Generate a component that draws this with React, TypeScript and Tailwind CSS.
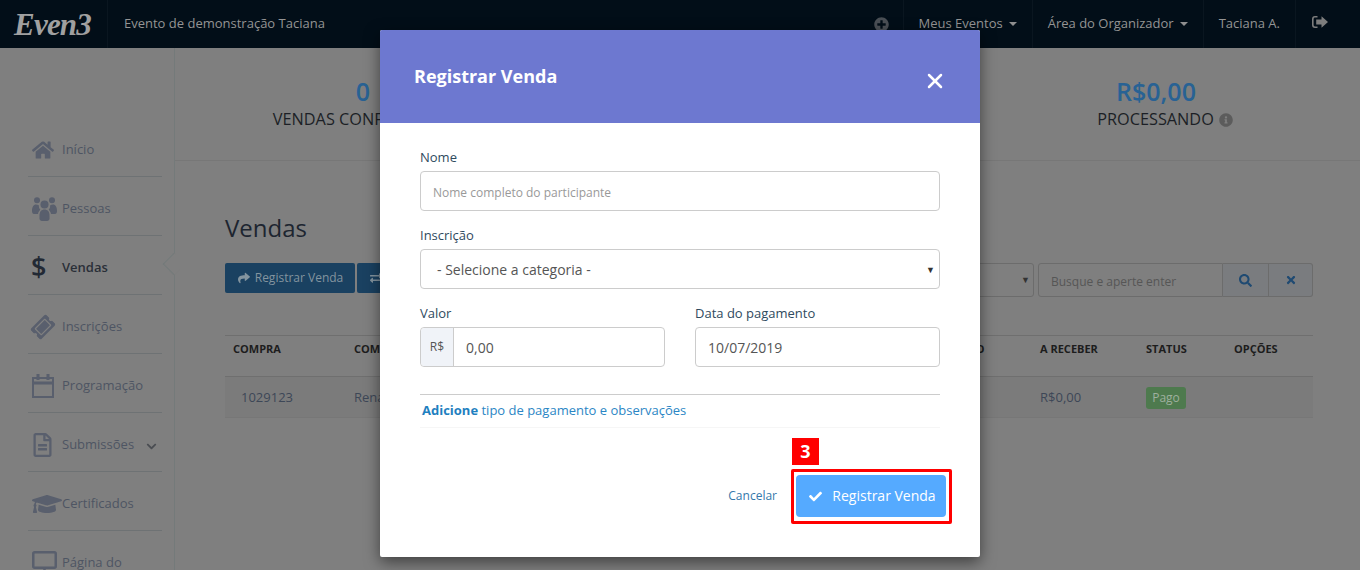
import {
  FaHome,
  FaTicketAlt,
  FaRegFileAlt,
  FaGraduationCap,
  FaShare,
  FaExchangeAlt,
  FaSearch,
  FaTimes,
  FaCheck,
  FaInfoCircle,
  FaPlusCircle,
  FaChevronDown,
} from "react-icons/fa";
import { FiX } from "react-icons/fi";

const UsersIcon = () => (
  <svg viewBox="0 0 25 24" className="h-[24px] w-[25px]" fill="currentColor">
    <circle cx="5" cy="3.2" r="3" />
    <circle cx="20" cy="3.2" r="3" />
    <circle cx="12.5" cy="7.5" r="4" />
    <path d="M0 14c0-4 1.500-6.500 4-6.500 1 0 2 .4 3 1-.4 1.500.2 3.200 1.300 4.300C7 14 6.200 15.500 6 17H2c-1.200 0-2-1-2-3z" />
    <path d="M25 14c0-4-1.500-6.500-4-6.500-1 0-2 .4-3 1 .4 1.500-.2 3.200-1.300 4.300 1.300 1.200 2.100 2.700 2.300 4.200h4c1.200 0 2-1 2-3z" />
    <path d="M12.500 12.500c-3 0-5 2-5 6v3c0 1.500 1 2.500 2.500 2.500h5c1.500 0 2.500-1 2.500-2.500v-3c0-4-2-6-5-6z" />
  </svg>
);

const CalendarIcon = () => (
  <svg viewBox="0 0 22 24" className="h-[24px] w-[22px]" fill="none" stroke="currentColor" strokeWidth="2">
    <rect x="1" y="4" width="20" height="19" />
    <path d="M1 9h20" strokeWidth="3" />
    <path d="M6 0v6M16 0v6" strokeWidth="3" />
  </svg>
);

const DesktopIcon = () => (
  <svg viewBox="0 0 25 24" className="h-[24px] w-[25px]" fill="none" stroke="currentColor" strokeWidth="2.500">
    <rect x="1.250" y="1.250" width="22.500" height="15.500" rx="1.500" />
    <path d="M12.500 17v4M7 22h11" />
  </svg>
);

const menu = [
  { label: "Início", icon: <FaHome className="h-[22px] w-[22px]" /> },
  { label: "Pessoas", icon: <UsersIcon /> },
  { label: "Vendas", icon: <span className="-ml-[1px] -mt-[3px] text-[27px] font-semibold leading-none">$</span>, active: true },
  { label: "Inscrições", icon: <FaTicketAlt className="h-[22px] w-[22px] -rotate-45" /> },
  { label: "Programação", icon: <CalendarIcon /> },
  { label: "Submissões", icon: <FaRegFileAlt className="h-[24px] w-[21px]" />, chevron: true },
  { label: "Certificados", icon: <FaGraduationCap className="h-[26px] w-[30px] shrink-0" /> },
  { label: "Página do", icon: <DesktopIcon /> },
];

const SignOut = () => (
  <svg viewBox="0 0 16 14" className="h-[14px] w-[16px]" fill="currentColor">
    <path d="M5.500 1H3a3 3 0 0 0-3 3v6a3 3 0 0 0 3 3h2.500v-1.600H3A1.400 1.400 0 0 1 1.600 10V4A1.400 1.400 0 0 1 3 2.600h2.500z" />
    <path d="M9.500 1.200 16 7l-6.500 5.800V9.600H4.200V4.400h5.300z" />
  </svg>
);

const Caret = () => (
  <span className="ml-[6px] inline-block h-0 w-0 border-x-[4px] border-t-[4px] border-x-transparent border-t-[#8f8f8f] align-middle" />
);

const Sidebar = () => (
  <aside className="w-[175px] shrink-0 border-r border-[#747a7a] pl-7 pr-3 pt-[70px]">
    {menu.map((item) => (
      <div
        key={item.label}
        className={`relative flex h-[59px] items-center border-b border-[#6e7274] pl-1 pt-[6px] text-[13px] ${
          item.active ? "font-semibold text-[#2a2f38]" : "text-[#4e5563]"
        }`}
      >
        <span className={`flex w-[30px] shrink-0 ${item.active ? "text-[#222934]" : "text-[#595f6d]"}`}>
          {item.icon}
        </span>
        <span>{item.label}</span>
        {item.chevron && <FaChevronDown className="ml-[12px] mt-[2px] h-[11px] w-[11px] text-[#4a4d52]" />}
        {item.active && (
          <span className="absolute right-[-20px] top-[20px] z-10 h-4 w-4 rotate-45 border-b border-l border-[#747a7a] bg-[#7f7f7f]" />
        )}
      </div>
    ))}
  </aside>
);

const Page = () => (
  <div className="flex h-[522px]">
    <Sidebar />
    <main className="min-w-0 flex-1">
      <div className="flex h-[113px] justify-between border-b border-[#777] pl-[56px] pr-[72px] pt-[26px]">
        <div className="w-[264px] text-center">
          <div className="text-[25px] font-semibold leading-[34px] text-[#286294]">0</div>
          <div className="text-[16.3px] font-medium leading-[23px] text-[#1c1f26]">VENDAS CONFIRMADAS</div>
        </div>
        <div className="w-[264px] text-center">
          <div className="text-[25px] font-semibold leading-[34px] text-[#286294]">R$0,00</div>
          <div className="flex items-center justify-center gap-[5px] pl-[18px] text-[16.3px] font-medium leading-[23px] text-[#1c1f26]">
            PROCESSANDO
            <FaInfoCircle className="h-[14px] w-[14px] text-[#5c5c5c]" />
          </div>
        </div>
      </div>
      <div className="pl-[50px] pr-[47px] pt-[50px]">
        <h1 className="text-[24px] leading-[34px] text-[#1d2530]">Vendas</h1>
        <div className="mt-[18px] flex items-start justify-between">
          <div className="flex gap-[2px]">
            <button className="flex h-[30px] w-[130px] items-center justify-center gap-[5px] rounded-[2px] bg-[#1a4161] pl-[1px] text-[12px] text-[#83949f]">
              <FaShare className="h-[12px] w-[12px]" />
              Registrar Venda
            </button>
            <button className="flex h-[30px] w-[130px] items-center gap-[5px] rounded-[2px] bg-[#1a4161] pl-[13px] text-[12px] text-[#83949f]">
              <FaExchangeAlt className="h-[12px] w-[12px]" />
              Transferir
            </button>
          </div>
          <div className="flex h-[34px] items-stretch">
            <div className="mr-1 flex w-[100px] items-center justify-end rounded-[3px] border border-[#6c6c6c] pr-[3px] text-[9px] text-[#333]">
              ▼
            </div>
            <div className="flex w-[185px] items-center rounded-l-[3px] border border-[#6c6c6c] pl-3 pt-[3px] text-[12px] text-[#565656]">
              Busque e aperte enter
            </div>
            <div className="flex w-[46px] items-center justify-center border-y border-r border-[#6c6c6c] bg-[#7a7c7f] text-[#1f4a72]">
              <FaSearch className="h-[13px] w-[13px]" />
            </div>
            <div className="flex w-[44px] items-center justify-center rounded-r-[3px] border-y border-r border-[#6c6c6c] bg-[#7a7c7f] text-[#1f4a72]">
              <FaTimes className="h-[12px] w-[12px]" />
            </div>
          </div>
        </div>
        <div className="mt-[38px] grid h-[42px] grid-cols-[121px_586px_100px_106px_88px_87px] items-center border-y border-[#6f6f6f] pb-[14px] text-[11px] font-bold text-[#1d1d1d]">
          <span className="pl-2">COMPRA</span>
          <span className="pl-2">COMPRADOR</span>
          <span className="pl-[5px]">LÍQUIDO</span>
          <span className="pl-2">A RECEBER</span>
          <span className="pl-2">STATUS</span>
          <span className="pl-2">OPÇÕES</span>
        </div>
        <div className="grid h-[41px] grid-cols-[121px_586px_100px_106px_88px_87px] items-center border-b border-[#777] bg-[#7b7b7b] pt-[2px] text-[13px] text-[#3d4757]">
          <span className="pl-4">1029123</span>
          <span className="pl-2">Renata</span>
          <span />
          <span className="pl-2">R$0,00</span>
          <span className="pl-2">
            <span className="inline-block h-[22px] w-10 rounded-[3px] bg-[#4e7a4e] text-center text-[12px] leading-[22px] text-[#9fb09f]">
              Pago
            </span>
          </span>
          <span />
        </div>
      </div>
    </main>
  </div>
);

const Modal = () => (
  <div className="absolute left-[380px] top-[30px] h-[527px] w-[600px] rounded-[2px] bg-white shadow-[0_5px_15px_rgba(0,0,0,0.5)]">
    <div className="flex h-[93px] items-start justify-between rounded-t-[2px] bg-[#6d78d0] pl-[34px] pr-[33px] text-white">
      <h2 className="pt-[34px] text-[18px] font-bold leading-[25px]">Registrar Venda</h2>
      <FiX className="mt-[39px] h-[24px] w-[24px] stroke-[2.5]" />
    </div>
    <div className="px-10 pt-[25px] text-[13px] leading-[18px] text-[#2f4a5e]">
      <label className="block">Nome</label>
      <input
        readOnly
        placeholder="Nome completo do participante"
        className="mt-[5px] block h-10 w-full rounded-[4px] border border-[#cccccc] px-3 pt-[2px] text-[12px] outline-none placeholder:text-[#999]"
      />
      <label className="mt-[15px] block">Inscrição</label>
      <div className="relative mt-[5px]">
        <select className="block h-10 w-full appearance-none rounded-[4px] border border-[#cccccc] bg-white pl-4 pt-[2px] text-[14px] text-[#555] outline-none">
          <option>- Selecione a categoria -</option>
        </select>
        <span className="absolute right-[5px] top-[12px] text-[9px] text-[#333]">▼</span>
      </div>
      <div className="mt-[15px] grid grid-cols-2 gap-[30px]">
        <div>
          <label className="block">Valor</label>
          <div className="mt-[5px] flex h-10 rounded-[4px] border border-[#cccccc]">
            <span className="flex w-[33px] items-center justify-center rounded-l-[4px] border-r border-[#cccccc] bg-[#f0f3f8] text-[12px] text-[#555]">
              R$
            </span>
            <input
              readOnly
              value="0,00"
              className="min-w-0 flex-1 rounded-r-[4px] pl-3 pt-[1px] text-[14px] text-[#555] outline-none"
            />
          </div>
        </div>
        <div>
          <label className="block">Data do pagamento</label>
          <input
            readOnly
            value="10/07/2019"
            className="mt-[5px] block h-10 w-full rounded-[4px] border border-[#cccccc] px-3 text-[14px] text-[#555] outline-none"
          />
        </div>
      </div>
      <div className="mt-[27px] border-b border-t border-b-[#f6f6f6] border-t-[#cccccc] pb-[8px] pl-[2px] pt-[6px] text-[13px] text-[#2b86c5]">
        <b className="text-[#1f7fc0]">Adicione</b> tipo de pagamento e observações
      </div>
      <div className="mt-[47px] flex items-center justify-end">
        <a className="mr-[19px] text-[12px] text-[#3478ab]">Cancelar</a>
        <button className="-mr-[6px] flex h-[42px] w-[150px] items-center justify-center gap-[10px] rounded-[4px] bg-[#55aaff] pl-[3px] text-[14px] text-white">
          <FaCheck className="h-[13px] w-[13px]" />
          Registrar Venda
        </button>
      </div>
    </div>
    <div className="absolute left-[412px] top-[408px] flex h-[27px] w-[27px] items-center justify-center bg-[#ff0000] text-[18px] font-bold text-white">
      3
    </div>
    <div className="absolute left-[411px] top-[439px] h-[55px] w-[161px] rounded-[2px] border-[3px] border-[#ff0000]" />
  </div>
);

export default function App() {
  return (
    <div className="relative h-[570px] overflow-hidden bg-[#7f7f7f] font-['Open_Sans',sans-serif]">
      <header className="flex h-12 items-stretch bg-[#020e18] text-[13px] text-[#949494]">
        <div className="flex w-[108px] items-center border-r border-[#0a1620] pl-[14px]">
          <span className="font-['Liberation_Serif',serif] text-[31px] font-bold italic leading-none tracking-tight text-[#a0a0a0]">
            Even3
          </span>
        </div>
        <div className="flex items-center pl-4">Evento de demonstração Taciana</div>
        <div className="ml-auto flex items-stretch">
          <div className="flex items-center pl-[18px] pr-[14px] text-[#4a4f55]">
            <FaPlusCircle className="h-[15px] w-[15px]" />
          </div>
          <div className="flex items-center border-l border-[#0a1620] px-[15px]">
            Meus Eventos
            <Caret />
          </div>
          <div className="flex items-center border-l border-[#0a1620] px-[15px]">
            Área do Organizador
            <Caret />
          </div>
          <div className="flex items-center border-l border-[#0a1620] px-[15px]">Taciana A.</div>
          <div className="flex w-[65px] items-start border-l border-[#0a1620] pl-[16px] pt-[15px] text-[#7d7d7d]">
            <SignOut />
          </div>
        </div>
      </header>
      <Page />
      <Modal />
    </div>
  );
}
